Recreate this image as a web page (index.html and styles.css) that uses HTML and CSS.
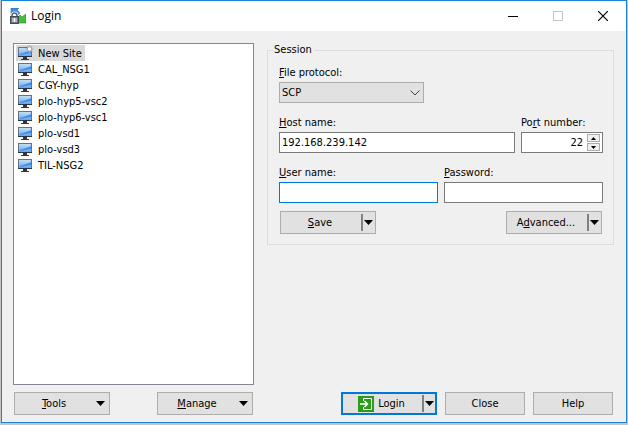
FILE: index.html
```html
<!DOCTYPE html>
<html lang="en">
<head>
    <meta charset="UTF-8">
    <meta name="viewport" content="width=device-width, initial-scale=1.0">
    <title>Login</title>
    <link rel="stylesheet" href="styles.css">
</head>
<body>
    <svg class="defs" width="0" height="0" aria-hidden="true">
        <defs>
            <linearGradient id="screen" x1="0" y1="0" x2="0" y2="1">
                <stop offset="0" stop-color="#c4dff2"/>
                <stop offset="1" stop-color="#5ea6f2"/>
            </linearGradient>
            <symbol id="monitor" viewBox="0 0 16 16">
                <g shape-rendering="crispEdges">
                    <rect x="1" y="2" width="14" height="10" fill="#5f7488"/>
                    <rect x="1" y="11" width="14" height="1" fill="#2c3640"/>
                    <rect x="2" y="3" width="12" height="8" fill="url(#screen)"/>
                    <rect x="6" y="12" width="4" height="2" fill="#2c3640"/>
                    <rect x="4" y="14" width="8" height="1" fill="#2c3640"/>
                </g>
                <path d="M2 10C4 8 9 8 14 5v3C10 9 6 9 2 10z" fill="#3f8ae0"/>
            </symbol>
            <symbol id="arrow" viewBox="0 0 9 5">
                <path d="M0 0h9L4.500 5z" fill="#000"/>
            </symbol>
        </defs>
    </svg>

    <div class="window">
        <header class="titlebar">
            <svg class="app-icon" width="16" height="16" viewBox="0 0 16 16">
                <path d="M1 0h8L7 2l3 3-3 3-3-3-3 2z" fill="#3b8ee8" stroke="#2468b4" stroke-width=".6"/>
                <path d="M8 9l2-2 2 2 4-3v9H8z" fill="#3fc23f" stroke="#23882b" stroke-width=".6"/>
                <path d="M2 9V7.500a2.500 2.500 0 0 1 5 0V9" fill="none" stroke="#fff" stroke-width="3"/>
                <path d="M2 9V7.500a2.500 2.500 0 0 1 5 0V9" fill="none" stroke="#59626b" stroke-width="1.500"/>
                <rect x=".5" y="8.500" width="8" height="7" fill="#6b747d" stroke="#434b53"/>
                <path d="M2 10h5v4H2z" fill="#b4babf"/>
                <path d="M4 10h1v4H4z" fill="#fff"/>
            </svg>
            <h1>Login</h1>
            <div class="window-controls">
                <button type="button" aria-label="Minimize">
                    <svg width="10" height="10"><path d="M0 5.500h10" stroke="#000"/></svg>
                </button>
                <button type="button" aria-label="Maximize" disabled>
                    <svg width="10" height="10"><rect x=".5" y=".5" width="9" height="9" fill="none" stroke="#c4c4c4"/></svg>
                </button>
                <button type="button" aria-label="Close window">
                    <svg width="10" height="10"><path d="M0 0l10 10M10 0L0 10" stroke="#000" stroke-width="1.200"/></svg>
                </button>
            </div>
        </header>

        <main class="content">
            <ul class="sites" role="listbox" aria-label="Sites">
                <li class="selected" role="option" aria-selected="true">
                    <svg width="16" height="16" viewBox="0 0 16 16">
                        <use href="#monitor"/>
                        <path d="M12.500 0v8M8.500 4h8M9.700 1.200l5.600 5.600M15.300 1.200L9.700 6.800" stroke="#a4a8ac" stroke-width="1.200"/>
                        <circle cx="12.500" cy="4" r="2.200" fill="#fff" stroke="#a4a8ac"/>
                    </svg>
                    <span>New Site</span>
                </li>
                <li role="option"><svg width="16" height="16"><use href="#monitor"/></svg><span>CAL_NSG1</span></li>
                <li role="option"><svg width="16" height="16"><use href="#monitor"/></svg><span>CGY-hyp</span></li>
                <li role="option"><svg width="16" height="16"><use href="#monitor"/></svg><span>plo-hyp5-vsc2</span></li>
                <li role="option"><svg width="16" height="16"><use href="#monitor"/></svg><span>plo-hyp6-vsc1</span></li>
                <li role="option"><svg width="16" height="16"><use href="#monitor"/></svg><span>plo-vsd1</span></li>
                <li role="option"><svg width="16" height="16"><use href="#monitor"/></svg><span>plo-vsd3</span></li>
                <li role="option"><svg width="16" height="16"><use href="#monitor"/></svg><span>TIL-NSG2</span></li>
            </ul>

            <form class="session-form">
                <fieldset class="session">
                    <legend>Session</legend>
                    <div class="fields">
                        <div class="field protocol">
                            <label for="protocol"><u>F</u>ile protocol:</label>
                            <div class="select">
                                <select id="protocol">
                                    <option>SFTP</option>
                                    <option selected>SCP</option>
                                    <option>FTP</option>
                                </select>
                                <svg width="10" height="6"><path d="M.5 .5L5 5L9.500 .5" fill="none" stroke="#444"/></svg>
                            </div>
                        </div>
                        <div class="row">
                            <div class="field">
                                <label for="host"><u>H</u>ost name:</label>
                                <input type="text" id="host" value="192.168.239.142">
                            </div>
                            <div class="field port">
                                <label for="port">Po<u>r</u>t number:</label>
                                <div class="spinner">
                                    <input type="text" id="port" inputmode="numeric" value="22">
                                    <div class="steps">
                                        <button type="button" aria-label="Increase port"><svg width="5" height="3"><path d="M0 3h5L2.500 0z"/></svg></button>
                                        <button type="button" aria-label="Decrease port"><svg width="5" height="3"><path d="M0 0h5L2.500 3z"/></svg></button>
                                    </div>
                                </div>
                            </div>
                        </div>
                        <div class="row">
                            <div class="field">
                                <label for="user"><u>U</u>ser name:</label>
                                <input type="text" id="user" class="active">
                            </div>
                            <div class="field">
                                <label for="password"><u>P</u>assword:</label>
                                <input type="password" id="password">
                            </div>
                        </div>
                    </div>
                    <div class="actions">
                        <div class="split">
                            <button type="button" class="main"><span><u>S</u>ave</span></button>
                            <button type="button" class="drop" aria-label="Save options"><svg width="9" height="5"><use href="#arrow"/></svg></button>
                        </div>
                        <div class="split">
                            <button type="button" class="main"><span>A<u>d</u>vanced...</span></button>
                            <button type="button" class="drop" aria-label="Advanced options"><svg width="9" height="5"><use href="#arrow"/></svg></button>
                        </div>
                    </div>
                </fieldset>
            </form>
        </main>

        <footer class="footer">
            <div class="tools">
                <button type="button" class="btn menu"><span><u>T</u>ools</span><svg width="9" height="5"><use href="#arrow"/></svg></button>
                <button type="button" class="btn menu"><span><u>M</u>anage</span><svg width="9" height="5"><use href="#arrow"/></svg></button>
            </div>
            <div class="dialog-buttons">
                <div class="split default">
                    <button type="button" class="main">
                        <svg width="16" height="16" viewBox="0 0 16 16">
                            <rect width="16" height="16" fill="#2c9a1c"/>
                            <path d="M5.500 5V2.500h8v11h-8V11" fill="none" stroke="#fff"/>
                            <path d="M2 8h7M6.500 5L9.500 8L6.500 11" fill="none" stroke="#fff" stroke-width="1.500"/>
                        </svg>
                        <span>Login</span>
                    </button>
                    <button type="button" class="drop" aria-label="Login options"><svg width="9" height="5"><use href="#arrow"/></svg></button>
                </div>
                <button type="button" class="btn">Close</button>
                <button type="button" class="btn">Help</button>
            </div>
        </footer>
    </div>
</body>
</html>
```
FILE: styles.css
```css
* {
    box-sizing: border-box;
}
body {
    margin: 0;
    padding: 0 1px 2px;
    min-height: 100vh;
    display: flex;
    background: #c4c4c4;
    color: #000;
    font-family: "DejaVu Sans Condensed", "Noto Sans", sans-serif;
    font-size: 11px;
    line-height: 16px;
}
button, input, select {
    font: inherit;
    color: inherit;
    margin: 0;
}
u {
    text-underline-offset: 1px;
}
svg {
    display: block;
    flex: none;
}
.defs {
    position: absolute;
}
.window {
    flex: 1;
    display: flex;
    flex-direction: column;
    background: #f0f0f0;
    border: 1px solid #1883d7;
}

/* Title bar */
.titlebar {
    display: flex;
    align-items: center;
    gap: 5px;
    height: 30px;
    padding: 0 1px 0 8px;
    background: #fff;
}
.titlebar h1 {
    flex: 1;
    margin: 0;
    font-family: "Open Sans", sans-serif;
    font-size: 12px;
    font-weight: normal;
}
.window-controls {
    display: flex;
    height: 28px;
}
.window-controls button {
    display: flex;
    align-items: center;
    justify-content: center;
    width: 45px;
    padding: 0;
    background: none;
    border: none;
}

/* Body */
.content {
    flex: 1;
    display: grid;
    grid-template-columns: 241fr 347fr;
    gap: 13px;
    padding: 12px 12px 7px 11px;
}
.sites {
    margin: 0;
    padding: 1px 2px;
    list-style: none;
    background: #fff;
    border: 1px solid #828790;
}
.sites li {
    display: flex;
    gap: 5px;
    width: max-content;
    height: 16px;
    padding: 0 3px 0 1px;
    line-height: 18px;
}
.sites svg {
    overflow: visible;
}
.sites .selected {
    background: #d9d9d9;
}
.session {
    margin: 0;
    padding: 7px 10px 10px 11px;
    border: 1px solid #dcdcdc;
}
.session legend {
    margin-left: -6px;
    padding: 0 2px 0 1px;
    line-height: 14px;
}
.fields {
    display: grid;
    gap: 11px;
}
.row {
    display: flex;
    gap: 6px;
}
.field {
    flex: 1;
    display: grid;
    line-height: 18px;
}
.field.protocol {
    width: 145px;
}
.field.port {
    flex: 0 0 82px;
}
.field input, .select select {
    width: 100%;
    height: 21px;
    padding: 0 2px;
    background: #fff;
    border: 1px solid #7a7a7a;
    border-radius: 0;
    outline: none;
}
.field input.active {
    border-color: #0078d7;
}
.select {
    position: relative;
}
.select select {
    display: block;
    appearance: none;
    background: #e1e1e1;
    border-color: #adadad;
}
.select svg {
    position: absolute;
    top: 8px;
    right: 4px;
    pointer-events: none;
}
.field .spinner {
    display: flex;
    height: 21px;
    padding: 1px 2px;
    background: #fff;
    border: 1px solid #7a7a7a;
}
.field .spinner input {
    flex: 1;
    min-width: 0;
    height: 17px;
    padding: 0 4px;
    border: none;
    text-align: right;
}
.steps {
    display: grid;
    gap: 1px;
    width: 13px;
}
.steps button {
    display: flex;
    align-items: center;
    justify-content: center;
    padding: 0;
    background: #f0f0f0;
    border: 1px solid #adadad;
}
.actions {
    display: flex;
    justify-content: space-between;
    padding: 8px 1px 0;
}

/* Buttons */
.btn {
    width: 80px;
    height: 23px;
    padding: 0;
    background: #e1e1e1;
    border: 1px solid #adadad;
}
.btn.menu {
    display: flex;
    align-items: center;
    width: 96px;
    padding-right: 4px;
}
.btn.menu span {
    flex: 1;
    padding-right: 3px;
}
.split {
    display: flex;
    width: 96px;
    height: 23px;
    background: #e1e1e1;
    border: 1px solid #adadad;
}
.split.default {
    border: 2px solid #0078d7;
}
.split button {
    display: flex;
    align-items: center;
    justify-content: center;
    padding: 0;
    background: none;
    border: none;
}
.split .main {
    flex: 1;
    gap: 4px;
    padding-right: 2px;
}
.split .drop {
    width: 14px;
    margin: 2px 0;
    padding-right: 2px;
    border-left: 2px solid #808080;
}
.split.default .drop {
    width: 13px;
    margin: 1px 0;
    padding-right: 1px;
}

/* Footer */
.footer {
    display: flex;
    justify-content: space-between;
    padding: 0 13px 7px 12px;
}
.tools {
    display: flex;
    gap: 47px;
}
.dialog-buttons {
    display: flex;
    gap: 8px;
}
```
